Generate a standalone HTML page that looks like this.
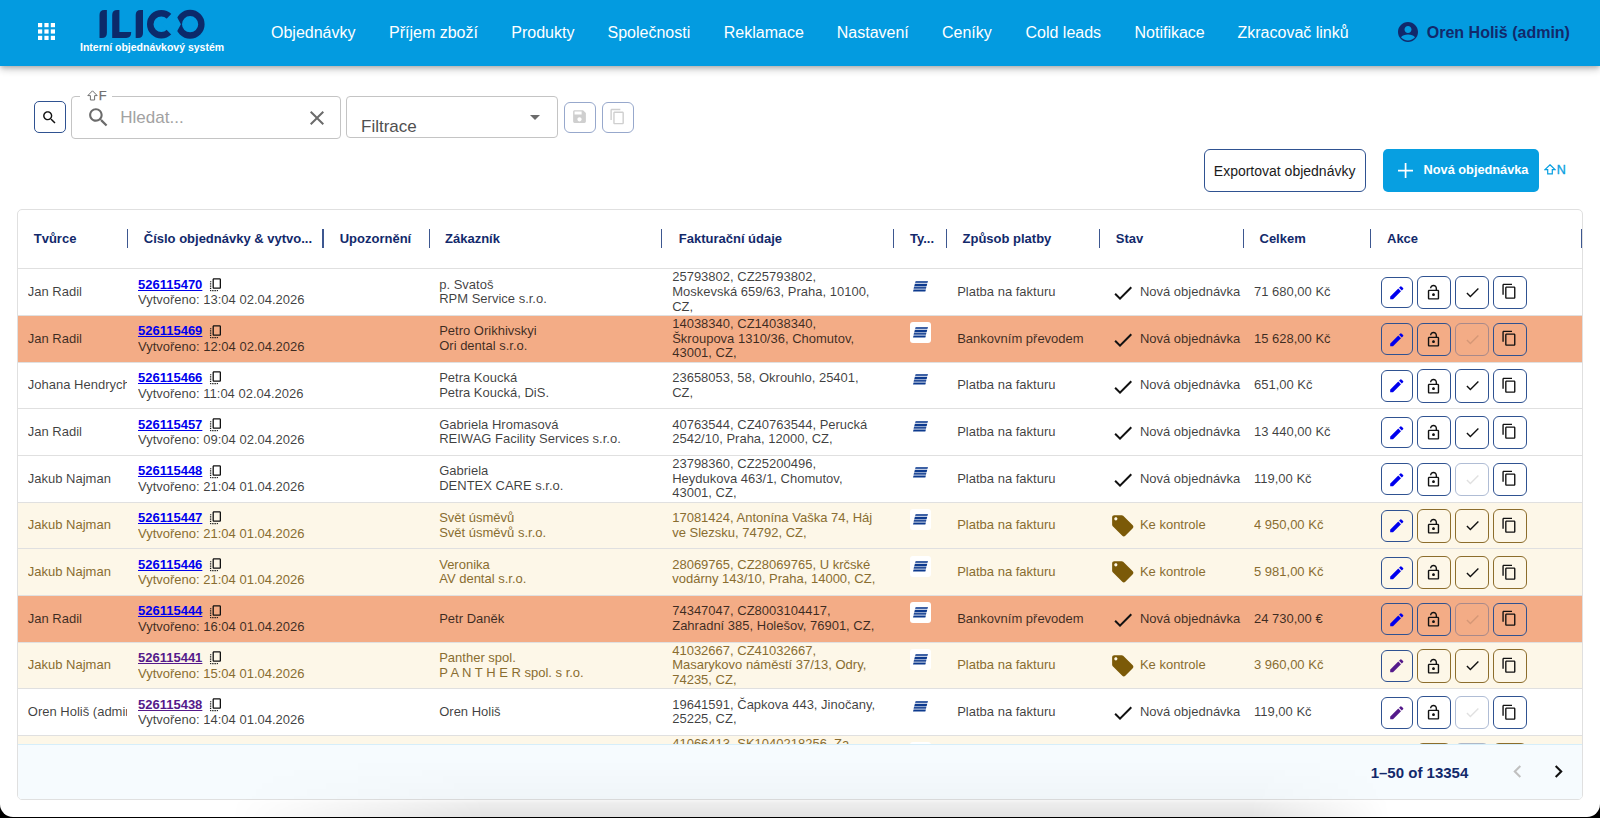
<!DOCTYPE html>
<html><head><meta charset="utf-8"><title>ILICO</title>
<style>
*{box-sizing:border-box}
html,body{margin:0;padding:0;width:1600px;height:818px;overflow:hidden;background:#000;font-family:"Liberation Sans",sans-serif}
#win{position:absolute;left:0;top:0;width:1600px;height:816.7px;background:#fff;border-radius:0 0 13px 13px;overflow:hidden}
.abs{position:absolute}
#hdr{position:absolute;left:0;top:0;width:1600px;height:66px;background:#039be0;box-shadow:0 2px 4px -1px rgba(0,0,0,.18),0 4px 6px 0 rgba(0,0,0,.12),0 2px 10px 0 rgba(0,0,0,.11);z-index:5}
.nav{position:absolute;top:24px;font-size:16px;color:#fff;white-space:nowrap;line-height:18px}
#tbl{position:absolute;left:17.4px;top:208.8px;width:1565.8px;height:591.2px;border:1px solid #e0e0e0;border-radius:5px;overflow:hidden;background:#fff}
.hcell{position:absolute;top:230.6px;font-size:13px;font-weight:bold;color:#12296b;white-space:nowrap;line-height:15px}
.sep{position:absolute;top:229px;width:1.3px;height:19px;background:#3d5790}
.row{position:absolute;left:0;width:1600px;height:46.67px;border-top:1px solid #e0e0e0;font-size:13px;line-height:14.67px}
.cell{position:absolute;top:0.3px;height:45.67px;display:flex;align-items:center;white-space:nowrap;overflow:hidden}
.clip{display:block;overflow:hidden;white-space:nowrap}
.num{display:block}
.num .l1{position:absolute;top:8.1px;left:0;height:16px;width:100px}
.num .l1 a{font-weight:bold;text-decoration:underline;text-underline-offset:0.5px}
.num .l2{position:absolute;top:23.7px;left:0}
.tbox{position:absolute;width:21.3px;height:21px;background:#fff;border-radius:3px;top:6.3px}
.abtn{position:absolute;border:1.5px solid;border-radius:6px}
</style></head><body><div id="win">

<div id="hdr">
<svg class="abs" style="left:38px;top:23px;width:17px;height:17px" viewBox="0 0 17 17"><rect x="0.0" y="0.0" width="4.2" height="4.2" fill="#fff"/><rect x="6.4" y="0.0" width="4.2" height="4.2" fill="#fff"/><rect x="12.8" y="0.0" width="4.2" height="4.2" fill="#fff"/><rect x="0.0" y="6.4" width="4.2" height="4.2" fill="#fff"/><rect x="6.4" y="6.4" width="4.2" height="4.2" fill="#fff"/><rect x="12.8" y="6.4" width="4.2" height="4.2" fill="#fff"/><rect x="0.0" y="12.8" width="4.2" height="4.2" fill="#fff"/><rect x="6.4" y="12.8" width="4.2" height="4.2" fill="#fff"/><rect x="12.8" y="12.8" width="4.2" height="4.2" fill="#fff"/></svg>
<svg class="abs" style="left:95px;top:5px;width:115px;height:37px" viewBox="0 0 115 37">
<g fill="#0c2a6a">
<path d="M4.5 33 V10 Q4.5 5 9.5 5 H11.9 V28 Q11.9 33 6.9 33 Z"/>
<path d="M17.2 33 V10 Q17.2 5 22.2 5 H24.4 V27.1 H36.2 Q36.2 33 31.2 33 Z"/>
<path d="M40.7 33 V10 Q40.7 5 45.7 5 H48 V28 Q48 33 43 33 Z"/>
</g>
<circle cx="66.3" cy="19.2" r="11.05" fill="none" stroke="#0c2a6a" stroke-width="6.5"/>
<circle cx="95.1" cy="19.2" r="11.3" fill="none" stroke="#0c2a6a" stroke-width="6.4"/>
<polygon points="66.3,19.2 81,4 81.7,11.4 85.9,19.2 81.7,27 81,34.4" fill="#039be0"/>
</svg>
<div class="abs" style="left:80px;top:41px;font-size:10.5px;font-weight:bold;color:#fff;white-space:nowrap;line-height:12px">Interní objednávkový systém</div>
<div class="nav" style="left:271px">Objednávky</div>
<div class="nav" style="left:389px">Příjem zboží</div>
<div class="nav" style="left:511.25px">Produkty</div>
<div class="nav" style="left:607.5px">Společnosti</div>
<div class="nav" style="left:723.75px">Reklamace</div>
<div class="nav" style="left:836.75px">Nastavení</div>
<div class="nav" style="left:942px">Ceníky</div>
<div class="nav" style="left:1025.5px">Cold leads</div>
<div class="nav" style="left:1134.5px">Notifikace</div>
<div class="nav" style="left:1237.5px">Zkracovač linků</div>
<svg style="position:absolute;left:1395.5px;top:19.9px;width:24px;height:24px" viewBox="0 0 24 24"><path fill="#12296b" d="M12 2C6.48 2 2 6.48 2 12s4.48 10 10 10 10-4.48 10-10S17.52 2 12 2zm0 4c1.93 0 3.5 1.57 3.5 3.5S13.93 13 12 13s-3.5-1.57-3.5-3.5S10.07 6 12 6zm7 11.25c-1.52 1.92-4.17 3.25-7 3.25s-5.48-1.33-7-3.25C6.19 15.3 9.02 14.5 12 14.5s5.81.8 7 2.75z"/></svg>
<div class="abs" style="left:1426.8px;top:24px;font-size:16px;font-weight:bold;color:#12296b;white-space:nowrap;line-height:18px">Oren Holiš (admin)</div>
</div>
<div class="abs" style="left:34px;top:101.3px;width:31.8px;height:31.9px;border:1.5px solid #2f5291;border-radius:5px"><svg style="position:absolute;left:5.8px;top:6.7px;width:17px;height:17px" viewBox="0 0 24 24"><path fill="#111" d="M15.5 14h-.79l-.28-.27C15.41 12.59 16 11.11 16 9.5 16 5.91 13.09 3 9.5 3S3 5.91 3 9.5 5.91 16 9.5 16c1.61 0 3.09-.59 4.23-1.57l.27.28v.79l5 4.99L20.49 19l-4.99-5zm-6 0C7.01 14 5 11.99 5 9.5S7.01 5 9.5 5 14 7.01 14 9.5 11.99 14 9.5 14z"/></svg></div>
<div class="abs" style="left:71.3px;top:96.4px;width:269.8px;height:42.4px;border:1.3px solid #c4c4c4;border-radius:4px"></div>
<div class="abs" style="left:80px;top:90px;width:31.6px;height:10px;background:#fff"></div>
<svg class="abs" style="left:86.5px;top:90.1px;width:11px;height:11px" viewBox="0 0 11 11"><path d="M5.5 0.8 L10.2 5.6 H7.6 V10 H3.4 V5.6 H0.8 Z" fill="none" stroke="#707070" stroke-width="1"/></svg>
<div class="abs" style="left:98.8px;top:89.4px;font-size:12.8px;color:#707070;line-height:14px;-webkit-text-stroke:0.25px #707070">F</div>
<svg style="position:absolute;left:85.8px;top:105px;width:25px;height:25px" viewBox="0 0 24 24"><path fill="#6b6b6b" d="M15.5 14h-.79l-.28-.27C15.41 12.59 16 11.11 16 9.5 16 5.91 13.09 3 9.5 3S3 5.91 3 9.5 5.91 16 9.5 16c1.61 0 3.09-.59 4.23-1.57l.27.28v.79l5 4.99L20.49 19l-4.99-5zm-6 0C7.01 14 5 11.99 5 9.5S7.01 5 9.5 5 14 7.01 14 9.5 11.99 14 9.5 14z"/></svg>
<div class="abs" style="left:120.3px;top:108.1px;font-size:17px;color:#a2a2a2;line-height:20px;white-space:nowrap">Hledat...</div>
<svg style="position:absolute;left:305.3px;top:105.8px;width:24px;height:24px" viewBox="0 0 24 24"><path fill="#6b6b6b" d="M19 6.41 17.59 5 12 10.59 6.41 5 5 6.41 10.59 12 5 17.59 6.41 19 12 13.41 17.59 19 19 17.59 13.41 12z"/></svg>
<div class="abs" style="left:346.4px;top:96.4px;width:211.5px;height:42.1px;border:1.3px solid #c4c4c4;border-radius:4px"></div>
<div class="abs" style="left:361px;top:116.6px;font-size:17px;color:#505050;line-height:20px;white-space:nowrap">Filtrace</div>
<svg style="position:absolute;left:523.2px;top:105.2px;width:24px;height:24px" viewBox="0 0 24 24"><path fill="#6b6b6b" d="M7 10l5 5 5-5z"/></svg>
<div class="abs" style="left:564.2px;top:101.7px;width:31.5px;height:31.3px;border:1.5px solid #97a8cc;border-radius:6px"><svg style="position:absolute;left:5.5px;top:5.3px;width:17px;height:17px" viewBox="0 0 24 24"><path fill="#cfcfcf" d="M17 3H5c-1.11 0-2 .9-2 2v14c0 1.1.89 2 2 2h14c1.1 0 2-.9 2-2V7l-4-4zm-5 16c-1.66 0-3-1.34-3-3s1.34-3 3-3 3 1.34 3 3-1.34 3-3 3zm3-10H5V5h10v4z"/></svg></div>
<div class="abs" style="left:602.2px;top:101.7px;width:31.6px;height:31.3px;border:1.5px solid #97a8cc;border-radius:6px"><svg style="position:absolute;left:5.5px;top:5.6px;width:17px;height:17px" viewBox="0 0 24 24"><path fill="#cfcfcf" d="M16 1H4c-1.1 0-2 .9-2 2v14h2V3h12V1zm3 4H8c-1.1 0-2 .9-2 2v14c0 1.1.9 2 2 2h11c1.1 0 2-.9 2-2V7c0-1.1-.9-2-2-2zm0 16H8V7h11v14z"/></svg></div>
<div class="abs" style="left:1203.8px;top:149.2px;width:161.8px;height:42.5px;border:1.6px solid #2f5291;border-radius:6px"></div>
<div class="abs" style="left:1213.8px;top:163px;font-size:14px;color:#1a1a1a;line-height:16px;white-space:nowrap">Exportovat objednávky</div>
<div class="abs" style="left:1382.7px;top:149.1px;width:156px;height:42.5px;background:#079fe1;border-radius:5px"></div>
<svg class="abs" style="left:1398px;top:163px;width:15.2px;height:15.2px" viewBox="0 0 15 15"><path d="M7.5 0 V15 M0 7.5 H15" stroke="#fff" stroke-width="1.7"/></svg>
<div class="abs" style="left:1423.6px;top:162.3px;font-size:12.75px;font-weight:bold;color:#fff;line-height:15px;white-space:nowrap">Nová objednávka</div>
<svg class="abs" style="left:1543.5px;top:164.3px;width:12px;height:10.5px" viewBox="0 0 12 10.5"><path d="M6 0.8 L11 5.6 H8.3 V9.8 H3.7 V5.6 H1 Z" fill="none" stroke="#079fe1" stroke-width="1.2"/></svg>
<div class="abs" style="left:1556.8px;top:162.5px;font-size:12.5px;color:#079fe1;line-height:14px;-webkit-text-stroke:0.35px #079fe1">N</div>
<div id="tbl"><div id="inner" style="position:absolute;left:-18.4px;top:-209.8px;width:1600px;height:818px">
<div class="hcell" style="left:33.75px">Tvůrce</div>
<div class="hcell" style="left:143.75px">Číslo objednávky &amp; vytvo...</div>
<div class="hcell" style="left:339.7px">Upozornění</div>
<div class="hcell" style="left:445px">Zákazník</div>
<div class="hcell" style="left:678.75px">Fakturační údaje</div>
<div class="hcell" style="left:910px">Ty...</div>
<div class="hcell" style="left:962.5px">Způsob platby</div>
<div class="hcell" style="left:1115.75px">Stav</div>
<div class="hcell" style="left:1259.5px">Celkem</div>
<div class="hcell" style="left:1387px">Akce</div>
<div class="sep" style="left:126.85px"></div>
<div class="sep" style="left:322.35px"></div>
<div class="sep" style="left:428.6px"></div>
<div class="sep" style="left:661.1px"></div>
<div class="sep" style="left:893.1px"></div>
<div class="sep" style="left:945.85px"></div>
<div class="sep" style="left:1098.85px"></div>
<div class="sep" style="left:1243.1px"></div>
<div class="sep" style="left:1369.85px"></div>
<div class="sep" style="left:1581.1px"></div>
<div class="row" style="top:268.3px;background:#ffffff;color:rgba(0,0,0,0.76)"><div class="cell" style="left:27.8px;width:99.2px"><span class="clip">Jan Radil</span></div><div class="cell num" style="left:138px;width:190px"><div class="l1"><a style="color:#0000ee">526115470</a><svg style="position:absolute;left:69.85px;top:-0.6px;width:15.6px;height:15.6px" viewBox="0 0 24 24"><path fill="#111" d="M18 2H9c-1.1 0-2 .9-2 2v12c0 1.1.9 2 2 2h9c1.1 0 2-.9 2-2V4c0-1.1-.9-2-2-2zm0 14H9V4h9v12zM3 15v-2h2v2H3zm0-5.5h2v2H3v-2zM10 20h2v2h-2v-2zm-7-1.5v-2h2v2H3zM5 22c-1.1 0-2-.9-2-2h2v2zm3.5 0h-2v-2h2v2zm5 0v-2h2c0 1.1-.9 2-2 2zM5 6v2H3c0-1.1.9-2 2-2z"/></svg></div><div class="l2">Vytvořeno: 13:04 02.04.2026</div></div><div class="cell" style="left:439.2px;width:225px"><div>p. Svatoš<br>RPM Service s.r.o.</div></div><div class="cell" style="left:672.2px;width:225px"><div>25793802, CZ25793802,<br>Moskevská 659/63, Praha, 10100,<br>CZ,</div></div><svg style="position:absolute;left:912.6px;top:11.5px;width:15px;height:11px" viewBox="0 0 15 11"><g fill="#0d3a8e"><polygon points="2.65,0 15,0 14.45,2.0 2.1,2.0" opacity="0.8"/><polygon points="1.9,2.75 14.25,2.75 13.7,4.9 1.35,4.9"/><polygon points="1.15,5.6 13.5,5.6 12.95,7.75 0.6,7.75" opacity="0.9"/><polygon points="0.55,8.45 12.9,8.45 12.35,10.6 0,10.6"/></g></svg><div class="cell" style="left:957.2px;width:140px">Platba na fakturu</div><svg style="position:absolute;left:1110.6px;top:11.9px;width:24px;height:24px" viewBox="0 0 24 24"><path fill="#111" d="M9 16.17 4.83 12l-1.42 1.41L9 19 21 7l-1.41-1.41z"/></svg><div class="cell" style="left:1139.9px;width:110px">Nová objednávka</div><div class="cell" style="left:1254px;width:110px">71 680,00 Kč</div><div class="abtn" style="left:1381px;top:7.5px;width:31.8px;height:31.7px;border-color:#2f5291"><svg style="position:absolute;left:5.5px;top:6.3px;width:17.5px;height:17.5px" viewBox="0 0 24 24"><path fill="#0000ee" d="M3 17.46v3.04c0 .28.22.5.5.5h3.04c.13 0 .26-.05.35-.15L17.81 9.94l-3.75-3.75L3.15 17.1c-.1.1-.15.22-.15.36zM20.71 7.04a.9959.9959 0 0 0 0-1.41l-2.34-2.34a.9959.9959 0 0 0-1.41 0l-1.83 1.83 3.75 3.75 1.83-1.83z"/></svg></div><div class="abtn" style="left:1417px;top:6.7px;width:33.5px;height:33.3px;border-color:#2f5291"><svg style="position:absolute;left:7.0px;top:7.4px;width:17px;height:17px" viewBox="0 0 24 24"><path fill="#111" d="M18 8h-1V6c0-2.76-2.24-5-5-5S7 3.24 7 6h2c0-1.66 1.34-3 3-3s3 1.34 3 3v2H6c-1.1 0-2 .9-2 2v10c0 1.1.9 2 2 2h12c1.1 0 2-.9 2-2V10c0-1.1-.9-2-2-2zm0 12H6V10h12v10zm-6-3c1.1 0 2-.9 2-2s-.9-2-2-2-2 .9-2 2 .9 2 2 2z"/></svg></div><div class="abtn" style="left:1455px;top:6.7px;width:33.8px;height:33.3px;border-color:#2f5291"><svg style="position:absolute;left:7.6px;top:6.9px;width:17px;height:17px" viewBox="0 0 24 24"><path fill="#111" d="M9 16.17 4.83 12l-1.42 1.41L9 19 21 7l-1.41-1.41z"/></svg></div><div class="abtn" style="left:1493px;top:6.7px;width:33.8px;height:33.3px;border-color:#2f5291"><svg style="position:absolute;left:7.1px;top:6.5px;width:16.5px;height:16.5px" viewBox="0 0 24 24"><path fill="#111" d="M16 1H4c-1.1 0-2 .9-2 2v14h2V3h12V1zm3 4H8c-1.1 0-2 .9-2 2v14c0 1.1.9 2 2 2h11c1.1 0 2-.9 2-2V7c0-1.1-.9-2-2-2zm0 16H8V7h11v14z"/></svg></div></div>
<div class="row" style="top:314.97px;background:#f3ac86;color:rgba(0,0,0,0.76)"><div class="cell" style="left:27.8px;width:99.2px"><span class="clip">Jan Radil</span></div><div class="cell num" style="left:138px;width:190px"><div class="l1"><a style="color:#0000ee">526115469</a><svg style="position:absolute;left:69.85px;top:-0.6px;width:15.6px;height:15.6px" viewBox="0 0 24 24"><path fill="#111" d="M18 2H9c-1.1 0-2 .9-2 2v12c0 1.1.9 2 2 2h9c1.1 0 2-.9 2-2V4c0-1.1-.9-2-2-2zm0 14H9V4h9v12zM3 15v-2h2v2H3zm0-5.5h2v2H3v-2zM10 20h2v2h-2v-2zm-7-1.5v-2h2v2H3zM5 22c-1.1 0-2-.9-2-2h2v2zm3.5 0h-2v-2h2v2zm5 0v-2h2c0 1.1-.9 2-2 2zM5 6v2H3c0-1.1.9-2 2-2z"/></svg></div><div class="l2">Vytvořeno: 12:04 02.04.2026</div></div><div class="cell" style="left:439.2px;width:225px"><div>Petro Orikhivskyi<br>Ori dental s.r.o.</div></div><div class="cell" style="left:672.2px;width:225px"><div>14038340, CZ14038340,<br>Škroupova 1310/36, Chomutov,<br>43001, CZ,</div></div><div class="tbox" style="left:909.8px"></div><svg style="position:absolute;left:912.6px;top:11.5px;width:15px;height:11px" viewBox="0 0 15 11"><g fill="#0d3a8e"><polygon points="2.65,0 15,0 14.45,2.0 2.1,2.0" opacity="0.8"/><polygon points="1.9,2.75 14.25,2.75 13.7,4.9 1.35,4.9"/><polygon points="1.15,5.6 13.5,5.6 12.95,7.75 0.6,7.75" opacity="0.9"/><polygon points="0.55,8.45 12.9,8.45 12.35,10.6 0,10.6"/></g></svg><div class="cell" style="left:957.2px;width:140px">Bankovním převodem</div><svg style="position:absolute;left:1110.6px;top:11.9px;width:24px;height:24px" viewBox="0 0 24 24"><path fill="#111" d="M9 16.17 4.83 12l-1.42 1.41L9 19 21 7l-1.41-1.41z"/></svg><div class="cell" style="left:1139.9px;width:110px">Nová objednávka</div><div class="cell" style="left:1254px;width:110px">15 628,00 Kč</div><div class="abtn" style="left:1381px;top:7.5px;width:31.8px;height:31.7px;border-color:#2f5291"><svg style="position:absolute;left:5.5px;top:6.3px;width:17.5px;height:17.5px" viewBox="0 0 24 24"><path fill="#0000ee" d="M3 17.46v3.04c0 .28.22.5.5.5h3.04c.13 0 .26-.05.35-.15L17.81 9.94l-3.75-3.75L3.15 17.1c-.1.1-.15.22-.15.36zM20.71 7.04a.9959.9959 0 0 0 0-1.41l-2.34-2.34a.9959.9959 0 0 0-1.41 0l-1.83 1.83 3.75 3.75 1.83-1.83z"/></svg></div><div class="abtn" style="left:1417px;top:6.7px;width:33.5px;height:33.3px;border-color:#2f5291"><svg style="position:absolute;left:7.0px;top:7.4px;width:17px;height:17px" viewBox="0 0 24 24"><path fill="#111" d="M18 8h-1V6c0-2.76-2.24-5-5-5S7 3.24 7 6h2c0-1.66 1.34-3 3-3s3 1.34 3 3v2H6c-1.1 0-2 .9-2 2v10c0 1.1.9 2 2 2h12c1.1 0 2-.9 2-2V10c0-1.1-.9-2-2-2zm0 12H6V10h12v10zm-6-3c1.1 0 2-.9 2-2s-.9-2-2-2-2 .9-2 2 .9 2 2 2z"/></svg></div><div class="abtn" style="left:1455px;top:6.7px;width:33.8px;height:33.3px;border-color:rgba(47,82,145,0.38)"><svg style="position:absolute;left:7.6px;top:6.9px;width:17px;height:17px" viewBox="0 0 24 24"><path fill="rgba(0,0,0,0.12)" d="M9 16.17 4.83 12l-1.42 1.41L9 19 21 7l-1.41-1.41z"/></svg></div><div class="abtn" style="left:1493px;top:6.7px;width:33.8px;height:33.3px;border-color:#2f5291"><svg style="position:absolute;left:7.1px;top:6.5px;width:16.5px;height:16.5px" viewBox="0 0 24 24"><path fill="#111" d="M16 1H4c-1.1 0-2 .9-2 2v14h2V3h12V1zm3 4H8c-1.1 0-2 .9-2 2v14c0 1.1.9 2 2 2h11c1.1 0 2-.9 2-2V7c0-1.1-.9-2-2-2zm0 16H8V7h11v14z"/></svg></div></div>
<div class="row" style="top:361.64px;background:#ffffff;color:rgba(0,0,0,0.76)"><div class="cell" style="left:27.8px;width:99.2px"><span class="clip">Johana Hendrych</span></div><div class="cell num" style="left:138px;width:190px"><div class="l1"><a style="color:#0000ee">526115466</a><svg style="position:absolute;left:69.85px;top:-0.6px;width:15.6px;height:15.6px" viewBox="0 0 24 24"><path fill="#111" d="M18 2H9c-1.1 0-2 .9-2 2v12c0 1.1.9 2 2 2h9c1.1 0 2-.9 2-2V4c0-1.1-.9-2-2-2zm0 14H9V4h9v12zM3 15v-2h2v2H3zm0-5.5h2v2H3v-2zM10 20h2v2h-2v-2zm-7-1.5v-2h2v2H3zM5 22c-1.1 0-2-.9-2-2h2v2zm3.5 0h-2v-2h2v2zm5 0v-2h2c0 1.1-.9 2-2 2zM5 6v2H3c0-1.1.9-2 2-2z"/></svg></div><div class="l2">Vytvořeno: 11:04 02.04.2026</div></div><div class="cell" style="left:439.2px;width:225px"><div>Petra Koucká<br>Petra Koucká, DiS.</div></div><div class="cell" style="left:672.2px;width:225px"><div>23658053, 58, Okrouhlo, 25401,<br>CZ,</div></div><svg style="position:absolute;left:912.6px;top:11.5px;width:15px;height:11px" viewBox="0 0 15 11"><g fill="#0d3a8e"><polygon points="2.65,0 15,0 14.45,2.0 2.1,2.0" opacity="0.8"/><polygon points="1.9,2.75 14.25,2.75 13.7,4.9 1.35,4.9"/><polygon points="1.15,5.6 13.5,5.6 12.95,7.75 0.6,7.75" opacity="0.9"/><polygon points="0.55,8.45 12.9,8.45 12.35,10.6 0,10.6"/></g></svg><div class="cell" style="left:957.2px;width:140px">Platba na fakturu</div><svg style="position:absolute;left:1110.6px;top:11.9px;width:24px;height:24px" viewBox="0 0 24 24"><path fill="#111" d="M9 16.17 4.83 12l-1.42 1.41L9 19 21 7l-1.41-1.41z"/></svg><div class="cell" style="left:1139.9px;width:110px">Nová objednávka</div><div class="cell" style="left:1254px;width:110px">651,00 Kč</div><div class="abtn" style="left:1381px;top:7.5px;width:31.8px;height:31.7px;border-color:#2f5291"><svg style="position:absolute;left:5.5px;top:6.3px;width:17.5px;height:17.5px" viewBox="0 0 24 24"><path fill="#0000ee" d="M3 17.46v3.04c0 .28.22.5.5.5h3.04c.13 0 .26-.05.35-.15L17.81 9.94l-3.75-3.75L3.15 17.1c-.1.1-.15.22-.15.36zM20.71 7.04a.9959.9959 0 0 0 0-1.41l-2.34-2.34a.9959.9959 0 0 0-1.41 0l-1.83 1.83 3.75 3.75 1.83-1.83z"/></svg></div><div class="abtn" style="left:1417px;top:6.7px;width:33.5px;height:33.3px;border-color:#2f5291"><svg style="position:absolute;left:7.0px;top:7.4px;width:17px;height:17px" viewBox="0 0 24 24"><path fill="#111" d="M18 8h-1V6c0-2.76-2.24-5-5-5S7 3.24 7 6h2c0-1.66 1.34-3 3-3s3 1.34 3 3v2H6c-1.1 0-2 .9-2 2v10c0 1.1.9 2 2 2h12c1.1 0 2-.9 2-2V10c0-1.1-.9-2-2-2zm0 12H6V10h12v10zm-6-3c1.1 0 2-.9 2-2s-.9-2-2-2-2 .9-2 2 .9 2 2 2z"/></svg></div><div class="abtn" style="left:1455px;top:6.7px;width:33.8px;height:33.3px;border-color:#2f5291"><svg style="position:absolute;left:7.6px;top:6.9px;width:17px;height:17px" viewBox="0 0 24 24"><path fill="#111" d="M9 16.17 4.83 12l-1.42 1.41L9 19 21 7l-1.41-1.41z"/></svg></div><div class="abtn" style="left:1493px;top:6.7px;width:33.8px;height:33.3px;border-color:#2f5291"><svg style="position:absolute;left:7.1px;top:6.5px;width:16.5px;height:16.5px" viewBox="0 0 24 24"><path fill="#111" d="M16 1H4c-1.1 0-2 .9-2 2v14h2V3h12V1zm3 4H8c-1.1 0-2 .9-2 2v14c0 1.1.9 2 2 2h11c1.1 0 2-.9 2-2V7c0-1.1-.9-2-2-2zm0 16H8V7h11v14z"/></svg></div></div>
<div class="row" style="top:408.31px;background:#ffffff;color:rgba(0,0,0,0.76)"><div class="cell" style="left:27.8px;width:99.2px"><span class="clip">Jan Radil</span></div><div class="cell num" style="left:138px;width:190px"><div class="l1"><a style="color:#0000ee">526115457</a><svg style="position:absolute;left:69.85px;top:-0.6px;width:15.6px;height:15.6px" viewBox="0 0 24 24"><path fill="#111" d="M18 2H9c-1.1 0-2 .9-2 2v12c0 1.1.9 2 2 2h9c1.1 0 2-.9 2-2V4c0-1.1-.9-2-2-2zm0 14H9V4h9v12zM3 15v-2h2v2H3zm0-5.5h2v2H3v-2zM10 20h2v2h-2v-2zm-7-1.5v-2h2v2H3zM5 22c-1.1 0-2-.9-2-2h2v2zm3.5 0h-2v-2h2v2zm5 0v-2h2c0 1.1-.9 2-2 2zM5 6v2H3c0-1.1.9-2 2-2z"/></svg></div><div class="l2">Vytvořeno: 09:04 02.04.2026</div></div><div class="cell" style="left:439.2px;width:225px"><div>Gabriela Hromasová<br>REIWAG Facility Services s.r.o.</div></div><div class="cell" style="left:672.2px;width:225px"><div>40763544, CZ40763544, Perucká<br>2542/10, Praha, 12000, CZ,</div></div><svg style="position:absolute;left:912.6px;top:11.5px;width:15px;height:11px" viewBox="0 0 15 11"><g fill="#0d3a8e"><polygon points="2.65,0 15,0 14.45,2.0 2.1,2.0" opacity="0.8"/><polygon points="1.9,2.75 14.25,2.75 13.7,4.9 1.35,4.9"/><polygon points="1.15,5.6 13.5,5.6 12.95,7.75 0.6,7.75" opacity="0.9"/><polygon points="0.55,8.45 12.9,8.45 12.35,10.6 0,10.6"/></g></svg><div class="cell" style="left:957.2px;width:140px">Platba na fakturu</div><svg style="position:absolute;left:1110.6px;top:11.9px;width:24px;height:24px" viewBox="0 0 24 24"><path fill="#111" d="M9 16.17 4.83 12l-1.42 1.41L9 19 21 7l-1.41-1.41z"/></svg><div class="cell" style="left:1139.9px;width:110px">Nová objednávka</div><div class="cell" style="left:1254px;width:110px">13 440,00 Kč</div><div class="abtn" style="left:1381px;top:7.5px;width:31.8px;height:31.7px;border-color:#2f5291"><svg style="position:absolute;left:5.5px;top:6.3px;width:17.5px;height:17.5px" viewBox="0 0 24 24"><path fill="#0000ee" d="M3 17.46v3.04c0 .28.22.5.5.5h3.04c.13 0 .26-.05.35-.15L17.81 9.94l-3.75-3.75L3.15 17.1c-.1.1-.15.22-.15.36zM20.71 7.04a.9959.9959 0 0 0 0-1.41l-2.34-2.34a.9959.9959 0 0 0-1.41 0l-1.83 1.83 3.75 3.75 1.83-1.83z"/></svg></div><div class="abtn" style="left:1417px;top:6.7px;width:33.5px;height:33.3px;border-color:#2f5291"><svg style="position:absolute;left:7.0px;top:7.4px;width:17px;height:17px" viewBox="0 0 24 24"><path fill="#111" d="M18 8h-1V6c0-2.76-2.24-5-5-5S7 3.24 7 6h2c0-1.66 1.34-3 3-3s3 1.34 3 3v2H6c-1.1 0-2 .9-2 2v10c0 1.1.9 2 2 2h12c1.1 0 2-.9 2-2V10c0-1.1-.9-2-2-2zm0 12H6V10h12v10zm-6-3c1.1 0 2-.9 2-2s-.9-2-2-2-2 .9-2 2 .9 2 2 2z"/></svg></div><div class="abtn" style="left:1455px;top:6.7px;width:33.8px;height:33.3px;border-color:#2f5291"><svg style="position:absolute;left:7.6px;top:6.9px;width:17px;height:17px" viewBox="0 0 24 24"><path fill="#111" d="M9 16.17 4.83 12l-1.42 1.41L9 19 21 7l-1.41-1.41z"/></svg></div><div class="abtn" style="left:1493px;top:6.7px;width:33.8px;height:33.3px;border-color:#2f5291"><svg style="position:absolute;left:7.1px;top:6.5px;width:16.5px;height:16.5px" viewBox="0 0 24 24"><path fill="#111" d="M16 1H4c-1.1 0-2 .9-2 2v14h2V3h12V1zm3 4H8c-1.1 0-2 .9-2 2v14c0 1.1.9 2 2 2h11c1.1 0 2-.9 2-2V7c0-1.1-.9-2-2-2zm0 16H8V7h11v14z"/></svg></div></div>
<div class="row" style="top:454.98px;background:#ffffff;color:rgba(0,0,0,0.76)"><div class="cell" style="left:27.8px;width:99.2px"><span class="clip">Jakub Najman</span></div><div class="cell num" style="left:138px;width:190px"><div class="l1"><a style="color:#0000ee">526115448</a><svg style="position:absolute;left:69.85px;top:-0.6px;width:15.6px;height:15.6px" viewBox="0 0 24 24"><path fill="#111" d="M18 2H9c-1.1 0-2 .9-2 2v12c0 1.1.9 2 2 2h9c1.1 0 2-.9 2-2V4c0-1.1-.9-2-2-2zm0 14H9V4h9v12zM3 15v-2h2v2H3zm0-5.5h2v2H3v-2zM10 20h2v2h-2v-2zm-7-1.5v-2h2v2H3zM5 22c-1.1 0-2-.9-2-2h2v2zm3.5 0h-2v-2h2v2zm5 0v-2h2c0 1.1-.9 2-2 2zM5 6v2H3c0-1.1.9-2 2-2z"/></svg></div><div class="l2">Vytvořeno: 21:04 01.04.2026</div></div><div class="cell" style="left:439.2px;width:225px"><div>Gabriela<br>DENTEX CARE s.r.o.</div></div><div class="cell" style="left:672.2px;width:225px"><div>23798360, CZ25200496,<br>Heydukova 463/1, Chomutov,<br>43001, CZ,</div></div><svg style="position:absolute;left:912.6px;top:11.5px;width:15px;height:11px" viewBox="0 0 15 11"><g fill="#0d3a8e"><polygon points="2.65,0 15,0 14.45,2.0 2.1,2.0" opacity="0.8"/><polygon points="1.9,2.75 14.25,2.75 13.7,4.9 1.35,4.9"/><polygon points="1.15,5.6 13.5,5.6 12.95,7.75 0.6,7.75" opacity="0.9"/><polygon points="0.55,8.45 12.9,8.45 12.35,10.6 0,10.6"/></g></svg><div class="cell" style="left:957.2px;width:140px">Platba na fakturu</div><svg style="position:absolute;left:1110.6px;top:11.9px;width:24px;height:24px" viewBox="0 0 24 24"><path fill="#111" d="M9 16.17 4.83 12l-1.42 1.41L9 19 21 7l-1.41-1.41z"/></svg><div class="cell" style="left:1139.9px;width:110px">Nová objednávka</div><div class="cell" style="left:1254px;width:110px">119,00 Kč</div><div class="abtn" style="left:1381px;top:7.5px;width:31.8px;height:31.7px;border-color:#2f5291"><svg style="position:absolute;left:5.5px;top:6.3px;width:17.5px;height:17.5px" viewBox="0 0 24 24"><path fill="#0000ee" d="M3 17.46v3.04c0 .28.22.5.5.5h3.04c.13 0 .26-.05.35-.15L17.81 9.94l-3.75-3.75L3.15 17.1c-.1.1-.15.22-.15.36zM20.71 7.04a.9959.9959 0 0 0 0-1.41l-2.34-2.34a.9959.9959 0 0 0-1.41 0l-1.83 1.83 3.75 3.75 1.83-1.83z"/></svg></div><div class="abtn" style="left:1417px;top:6.7px;width:33.5px;height:33.3px;border-color:#2f5291"><svg style="position:absolute;left:7.0px;top:7.4px;width:17px;height:17px" viewBox="0 0 24 24"><path fill="#111" d="M18 8h-1V6c0-2.76-2.24-5-5-5S7 3.24 7 6h2c0-1.66 1.34-3 3-3s3 1.34 3 3v2H6c-1.1 0-2 .9-2 2v10c0 1.1.9 2 2 2h12c1.1 0 2-.9 2-2V10c0-1.1-.9-2-2-2zm0 12H6V10h12v10zm-6-3c1.1 0 2-.9 2-2s-.9-2-2-2-2 .9-2 2 .9 2 2 2z"/></svg></div><div class="abtn" style="left:1455px;top:6.7px;width:33.8px;height:33.3px;border-color:rgba(47,82,145,0.38)"><svg style="position:absolute;left:7.6px;top:6.9px;width:17px;height:17px" viewBox="0 0 24 24"><path fill="rgba(0,0,0,0.12)" d="M9 16.17 4.83 12l-1.42 1.41L9 19 21 7l-1.41-1.41z"/></svg></div><div class="abtn" style="left:1493px;top:6.7px;width:33.8px;height:33.3px;border-color:#2f5291"><svg style="position:absolute;left:7.1px;top:6.5px;width:16.5px;height:16.5px" viewBox="0 0 24 24"><path fill="#111" d="M16 1H4c-1.1 0-2 .9-2 2v14h2V3h12V1zm3 4H8c-1.1 0-2 .9-2 2v14c0 1.1.9 2 2 2h11c1.1 0 2-.9 2-2V7c0-1.1-.9-2-2-2zm0 16H8V7h11v14z"/></svg></div></div>
<div class="row" style="top:501.65000000000003px;background:#fdf7e8;color:#896d30"><div class="cell" style="left:27.8px;width:99.2px"><span class="clip">Jakub Najman</span></div><div class="cell num" style="left:138px;width:190px"><div class="l1"><a style="color:#0000ee">526115447</a><svg style="position:absolute;left:69.85px;top:-0.6px;width:15.6px;height:15.6px" viewBox="0 0 24 24"><path fill="#111" d="M18 2H9c-1.1 0-2 .9-2 2v12c0 1.1.9 2 2 2h9c1.1 0 2-.9 2-2V4c0-1.1-.9-2-2-2zm0 14H9V4h9v12zM3 15v-2h2v2H3zm0-5.5h2v2H3v-2zM10 20h2v2h-2v-2zm-7-1.5v-2h2v2H3zM5 22c-1.1 0-2-.9-2-2h2v2zm3.5 0h-2v-2h2v2zm5 0v-2h2c0 1.1-.9 2-2 2zM5 6v2H3c0-1.1.9-2 2-2z"/></svg></div><div class="l2">Vytvořeno: 21:04 01.04.2026</div></div><div class="cell" style="left:439.2px;width:225px"><div>Svět úsměvů<br>Svět úsměvů s.r.o.</div></div><div class="cell" style="left:672.2px;width:225px"><div>17081424, Antonína Vaška 74, Háj<br>ve Slezsku, 74792, CZ,</div></div><div class="tbox" style="left:909.8px"></div><svg style="position:absolute;left:912.6px;top:11.5px;width:15px;height:11px" viewBox="0 0 15 11"><g fill="#0d3a8e"><polygon points="2.65,0 15,0 14.45,2.0 2.1,2.0" opacity="0.8"/><polygon points="1.9,2.75 14.25,2.75 13.7,4.9 1.35,4.9"/><polygon points="1.15,5.6 13.5,5.6 12.95,7.75 0.6,7.75" opacity="0.9"/><polygon points="0.55,8.45 12.9,8.45 12.35,10.6 0,10.6"/></g></svg><div class="cell" style="left:957.2px;width:140px">Platba na fakturu</div><svg style="position:absolute;left:1109.9px;top:9.9px;width:25.5px;height:25.5px" viewBox="0 0 24 24"><path fill="#7b5a08" d="M21.41 11.58l-9-9C12.05 2.22 11.55 2 11 2H4c-1.1 0-2 .9-2 2v7c0 .55.22 1.05.59 1.42l9 9c.36.36.86.58 1.41.58.55 0 1.05-.22 1.41-.59l7-7c.37-.36.59-.86.59-1.41 0-.55-.23-1.06-.59-1.42zM5.5 7C4.67 7 4 6.33 4 5.5S4.67 4 5.5 4 7 4.67 7 5.5 6.33 7 5.5 7z"/></svg><div class="cell" style="left:1139.9px;width:110px">Ke kontrole</div><div class="cell" style="left:1254px;width:110px">4 950,00 Kč</div><div class="abtn" style="left:1381px;top:7.5px;width:31.8px;height:31.7px;border-color:#2f5291"><svg style="position:absolute;left:5.5px;top:6.3px;width:17.5px;height:17.5px" viewBox="0 0 24 24"><path fill="#0000ee" d="M3 17.46v3.04c0 .28.22.5.5.5h3.04c.13 0 .26-.05.35-.15L17.81 9.94l-3.75-3.75L3.15 17.1c-.1.1-.15.22-.15.36zM20.71 7.04a.9959.9959 0 0 0 0-1.41l-2.34-2.34a.9959.9959 0 0 0-1.41 0l-1.83 1.83 3.75 3.75 1.83-1.83z"/></svg></div><div class="abtn" style="left:1417px;top:6.7px;width:33.5px;height:33.3px;border-color:#8c6d2c"><svg style="position:absolute;left:7.0px;top:7.4px;width:17px;height:17px" viewBox="0 0 24 24"><path fill="#111" d="M18 8h-1V6c0-2.76-2.24-5-5-5S7 3.24 7 6h2c0-1.66 1.34-3 3-3s3 1.34 3 3v2H6c-1.1 0-2 .9-2 2v10c0 1.1.9 2 2 2h12c1.1 0 2-.9 2-2V10c0-1.1-.9-2-2-2zm0 12H6V10h12v10zm-6-3c1.1 0 2-.9 2-2s-.9-2-2-2-2 .9-2 2 .9 2 2 2z"/></svg></div><div class="abtn" style="left:1455px;top:6.7px;width:33.8px;height:33.3px;border-color:#8c6d2c"><svg style="position:absolute;left:7.6px;top:6.9px;width:17px;height:17px" viewBox="0 0 24 24"><path fill="#111" d="M9 16.17 4.83 12l-1.42 1.41L9 19 21 7l-1.41-1.41z"/></svg></div><div class="abtn" style="left:1493px;top:6.7px;width:33.8px;height:33.3px;border-color:#8c6d2c"><svg style="position:absolute;left:7.1px;top:6.5px;width:16.5px;height:16.5px" viewBox="0 0 24 24"><path fill="#111" d="M16 1H4c-1.1 0-2 .9-2 2v14h2V3h12V1zm3 4H8c-1.1 0-2 .9-2 2v14c0 1.1.9 2 2 2h11c1.1 0 2-.9 2-2V7c0-1.1-.9-2-2-2zm0 16H8V7h11v14z"/></svg></div></div>
<div class="row" style="top:548.3199999999999px;background:#fdf7e8;color:#896d30"><div class="cell" style="left:27.8px;width:99.2px"><span class="clip">Jakub Najman</span></div><div class="cell num" style="left:138px;width:190px"><div class="l1"><a style="color:#0000ee">526115446</a><svg style="position:absolute;left:69.85px;top:-0.6px;width:15.6px;height:15.6px" viewBox="0 0 24 24"><path fill="#111" d="M18 2H9c-1.1 0-2 .9-2 2v12c0 1.1.9 2 2 2h9c1.1 0 2-.9 2-2V4c0-1.1-.9-2-2-2zm0 14H9V4h9v12zM3 15v-2h2v2H3zm0-5.5h2v2H3v-2zM10 20h2v2h-2v-2zm-7-1.5v-2h2v2H3zM5 22c-1.1 0-2-.9-2-2h2v2zm3.5 0h-2v-2h2v2zm5 0v-2h2c0 1.1-.9 2-2 2zM5 6v2H3c0-1.1.9-2 2-2z"/></svg></div><div class="l2">Vytvořeno: 21:04 01.04.2026</div></div><div class="cell" style="left:439.2px;width:225px"><div>Veronika<br>AV dental s.r.o.</div></div><div class="cell" style="left:672.2px;width:225px"><div>28069765, CZ28069765, U krčské<br>vodárny 143/10, Praha, 14000, CZ,</div></div><div class="tbox" style="left:909.8px"></div><svg style="position:absolute;left:912.6px;top:11.5px;width:15px;height:11px" viewBox="0 0 15 11"><g fill="#0d3a8e"><polygon points="2.65,0 15,0 14.45,2.0 2.1,2.0" opacity="0.8"/><polygon points="1.9,2.75 14.25,2.75 13.7,4.9 1.35,4.9"/><polygon points="1.15,5.6 13.5,5.6 12.95,7.75 0.6,7.75" opacity="0.9"/><polygon points="0.55,8.45 12.9,8.45 12.35,10.6 0,10.6"/></g></svg><div class="cell" style="left:957.2px;width:140px">Platba na fakturu</div><svg style="position:absolute;left:1109.9px;top:9.9px;width:25.5px;height:25.5px" viewBox="0 0 24 24"><path fill="#7b5a08" d="M21.41 11.58l-9-9C12.05 2.22 11.55 2 11 2H4c-1.1 0-2 .9-2 2v7c0 .55.22 1.05.59 1.42l9 9c.36.36.86.58 1.41.58.55 0 1.05-.22 1.41-.59l7-7c.37-.36.59-.86.59-1.41 0-.55-.23-1.06-.59-1.42zM5.5 7C4.67 7 4 6.33 4 5.5S4.67 4 5.5 4 7 4.67 7 5.5 6.33 7 5.5 7z"/></svg><div class="cell" style="left:1139.9px;width:110px">Ke kontrole</div><div class="cell" style="left:1254px;width:110px">5 981,00 Kč</div><div class="abtn" style="left:1381px;top:7.5px;width:31.8px;height:31.7px;border-color:#2f5291"><svg style="position:absolute;left:5.5px;top:6.3px;width:17.5px;height:17.5px" viewBox="0 0 24 24"><path fill="#0000ee" d="M3 17.46v3.04c0 .28.22.5.5.5h3.04c.13 0 .26-.05.35-.15L17.81 9.94l-3.75-3.75L3.15 17.1c-.1.1-.15.22-.15.36zM20.71 7.04a.9959.9959 0 0 0 0-1.41l-2.34-2.34a.9959.9959 0 0 0-1.41 0l-1.83 1.83 3.75 3.75 1.83-1.83z"/></svg></div><div class="abtn" style="left:1417px;top:6.7px;width:33.5px;height:33.3px;border-color:#8c6d2c"><svg style="position:absolute;left:7.0px;top:7.4px;width:17px;height:17px" viewBox="0 0 24 24"><path fill="#111" d="M18 8h-1V6c0-2.76-2.24-5-5-5S7 3.24 7 6h2c0-1.66 1.34-3 3-3s3 1.34 3 3v2H6c-1.1 0-2 .9-2 2v10c0 1.1.9 2 2 2h12c1.1 0 2-.9 2-2V10c0-1.1-.9-2-2-2zm0 12H6V10h12v10zm-6-3c1.1 0 2-.9 2-2s-.9-2-2-2-2 .9-2 2 .9 2 2 2z"/></svg></div><div class="abtn" style="left:1455px;top:6.7px;width:33.8px;height:33.3px;border-color:#8c6d2c"><svg style="position:absolute;left:7.6px;top:6.9px;width:17px;height:17px" viewBox="0 0 24 24"><path fill="#111" d="M9 16.17 4.83 12l-1.42 1.41L9 19 21 7l-1.41-1.41z"/></svg></div><div class="abtn" style="left:1493px;top:6.7px;width:33.8px;height:33.3px;border-color:#8c6d2c"><svg style="position:absolute;left:7.1px;top:6.5px;width:16.5px;height:16.5px" viewBox="0 0 24 24"><path fill="#111" d="M16 1H4c-1.1 0-2 .9-2 2v14h2V3h12V1zm3 4H8c-1.1 0-2 .9-2 2v14c0 1.1.9 2 2 2h11c1.1 0 2-.9 2-2V7c0-1.1-.9-2-2-2zm0 16H8V7h11v14z"/></svg></div></div>
<div class="row" style="top:594.99px;background:#f3ac86;color:rgba(0,0,0,0.76)"><div class="cell" style="left:27.8px;width:99.2px"><span class="clip">Jan Radil</span></div><div class="cell num" style="left:138px;width:190px"><div class="l1"><a style="color:#0000ee">526115444</a><svg style="position:absolute;left:69.85px;top:-0.6px;width:15.6px;height:15.6px" viewBox="0 0 24 24"><path fill="#111" d="M18 2H9c-1.1 0-2 .9-2 2v12c0 1.1.9 2 2 2h9c1.1 0 2-.9 2-2V4c0-1.1-.9-2-2-2zm0 14H9V4h9v12zM3 15v-2h2v2H3zm0-5.5h2v2H3v-2zM10 20h2v2h-2v-2zm-7-1.5v-2h2v2H3zM5 22c-1.1 0-2-.9-2-2h2v2zm3.5 0h-2v-2h2v2zm5 0v-2h2c0 1.1-.9 2-2 2zM5 6v2H3c0-1.1.9-2 2-2z"/></svg></div><div class="l2">Vytvořeno: 16:04 01.04.2026</div></div><div class="cell" style="left:439.2px;width:225px"><div>Petr Daněk</div></div><div class="cell" style="left:672.2px;width:225px"><div>74347047, CZ8003104417,<br>Zahradní 385, Holešov, 76901, CZ,</div></div><div class="tbox" style="left:909.8px"></div><svg style="position:absolute;left:912.6px;top:11.5px;width:15px;height:11px" viewBox="0 0 15 11"><g fill="#0d3a8e"><polygon points="2.65,0 15,0 14.45,2.0 2.1,2.0" opacity="0.8"/><polygon points="1.9,2.75 14.25,2.75 13.7,4.9 1.35,4.9"/><polygon points="1.15,5.6 13.5,5.6 12.95,7.75 0.6,7.75" opacity="0.9"/><polygon points="0.55,8.45 12.9,8.45 12.35,10.6 0,10.6"/></g></svg><div class="cell" style="left:957.2px;width:140px">Bankovním převodem</div><svg style="position:absolute;left:1110.6px;top:11.9px;width:24px;height:24px" viewBox="0 0 24 24"><path fill="#111" d="M9 16.17 4.83 12l-1.42 1.41L9 19 21 7l-1.41-1.41z"/></svg><div class="cell" style="left:1139.9px;width:110px">Nová objednávka</div><div class="cell" style="left:1254px;width:110px">24 730,00 €</div><div class="abtn" style="left:1381px;top:7.5px;width:31.8px;height:31.7px;border-color:#2f5291"><svg style="position:absolute;left:5.5px;top:6.3px;width:17.5px;height:17.5px" viewBox="0 0 24 24"><path fill="#0000ee" d="M3 17.46v3.04c0 .28.22.5.5.5h3.04c.13 0 .26-.05.35-.15L17.81 9.94l-3.75-3.75L3.15 17.1c-.1.1-.15.22-.15.36zM20.71 7.04a.9959.9959 0 0 0 0-1.41l-2.34-2.34a.9959.9959 0 0 0-1.41 0l-1.83 1.83 3.75 3.75 1.83-1.83z"/></svg></div><div class="abtn" style="left:1417px;top:6.7px;width:33.5px;height:33.3px;border-color:#2f5291"><svg style="position:absolute;left:7.0px;top:7.4px;width:17px;height:17px" viewBox="0 0 24 24"><path fill="#111" d="M18 8h-1V6c0-2.76-2.24-5-5-5S7 3.24 7 6h2c0-1.66 1.34-3 3-3s3 1.34 3 3v2H6c-1.1 0-2 .9-2 2v10c0 1.1.9 2 2 2h12c1.1 0 2-.9 2-2V10c0-1.1-.9-2-2-2zm0 12H6V10h12v10zm-6-3c1.1 0 2-.9 2-2s-.9-2-2-2-2 .9-2 2 .9 2 2 2z"/></svg></div><div class="abtn" style="left:1455px;top:6.7px;width:33.8px;height:33.3px;border-color:rgba(47,82,145,0.38)"><svg style="position:absolute;left:7.6px;top:6.9px;width:17px;height:17px" viewBox="0 0 24 24"><path fill="rgba(0,0,0,0.12)" d="M9 16.17 4.83 12l-1.42 1.41L9 19 21 7l-1.41-1.41z"/></svg></div><div class="abtn" style="left:1493px;top:6.7px;width:33.8px;height:33.3px;border-color:#2f5291"><svg style="position:absolute;left:7.1px;top:6.5px;width:16.5px;height:16.5px" viewBox="0 0 24 24"><path fill="#111" d="M16 1H4c-1.1 0-2 .9-2 2v14h2V3h12V1zm3 4H8c-1.1 0-2 .9-2 2v14c0 1.1.9 2 2 2h11c1.1 0 2-.9 2-2V7c0-1.1-.9-2-2-2zm0 16H8V7h11v14z"/></svg></div></div>
<div class="row" style="top:641.6600000000001px;background:#fdf7e8;color:#896d30"><div class="cell" style="left:27.8px;width:99.2px"><span class="clip">Jakub Najman</span></div><div class="cell num" style="left:138px;width:190px"><div class="l1"><a style="color:#551a8b">526115441</a><svg style="position:absolute;left:69.85px;top:-0.6px;width:15.6px;height:15.6px" viewBox="0 0 24 24"><path fill="#111" d="M18 2H9c-1.1 0-2 .9-2 2v12c0 1.1.9 2 2 2h9c1.1 0 2-.9 2-2V4c0-1.1-.9-2-2-2zm0 14H9V4h9v12zM3 15v-2h2v2H3zm0-5.5h2v2H3v-2zM10 20h2v2h-2v-2zm-7-1.5v-2h2v2H3zM5 22c-1.1 0-2-.9-2-2h2v2zm3.5 0h-2v-2h2v2zm5 0v-2h2c0 1.1-.9 2-2 2zM5 6v2H3c0-1.1.9-2 2-2z"/></svg></div><div class="l2">Vytvořeno: 15:04 01.04.2026</div></div><div class="cell" style="left:439.2px;width:225px"><div>Panther spol.<br>P A N T H E R spol. s r.o.</div></div><div class="cell" style="left:672.2px;width:225px"><div>41032667, CZ41032667,<br>Masarykovo náměstí 37/13, Odry,<br>74235, CZ,</div></div><div class="tbox" style="left:909.8px"></div><svg style="position:absolute;left:912.6px;top:11.5px;width:15px;height:11px" viewBox="0 0 15 11"><g fill="#0d3a8e"><polygon points="2.65,0 15,0 14.45,2.0 2.1,2.0" opacity="0.8"/><polygon points="1.9,2.75 14.25,2.75 13.7,4.9 1.35,4.9"/><polygon points="1.15,5.6 13.5,5.6 12.95,7.75 0.6,7.75" opacity="0.9"/><polygon points="0.55,8.45 12.9,8.45 12.35,10.6 0,10.6"/></g></svg><div class="cell" style="left:957.2px;width:140px">Platba na fakturu</div><svg style="position:absolute;left:1109.9px;top:9.9px;width:25.5px;height:25.5px" viewBox="0 0 24 24"><path fill="#7b5a08" d="M21.41 11.58l-9-9C12.05 2.22 11.55 2 11 2H4c-1.1 0-2 .9-2 2v7c0 .55.22 1.05.59 1.42l9 9c.36.36.86.58 1.41.58.55 0 1.05-.22 1.41-.59l7-7c.37-.36.59-.86.59-1.41 0-.55-.23-1.06-.59-1.42zM5.5 7C4.67 7 4 6.33 4 5.5S4.67 4 5.5 4 7 4.67 7 5.5 6.33 7 5.5 7z"/></svg><div class="cell" style="left:1139.9px;width:110px">Ke kontrole</div><div class="cell" style="left:1254px;width:110px">3 960,00 Kč</div><div class="abtn" style="left:1381px;top:7.5px;width:31.8px;height:31.7px;border-color:#2f5291"><svg style="position:absolute;left:5.5px;top:6.3px;width:17.5px;height:17.5px" viewBox="0 0 24 24"><path fill="#551a8b" d="M3 17.46v3.04c0 .28.22.5.5.5h3.04c.13 0 .26-.05.35-.15L17.81 9.94l-3.75-3.75L3.15 17.1c-.1.1-.15.22-.15.36zM20.71 7.04a.9959.9959 0 0 0 0-1.41l-2.34-2.34a.9959.9959 0 0 0-1.41 0l-1.83 1.83 3.75 3.75 1.83-1.83z"/></svg></div><div class="abtn" style="left:1417px;top:6.7px;width:33.5px;height:33.3px;border-color:#8c6d2c"><svg style="position:absolute;left:7.0px;top:7.4px;width:17px;height:17px" viewBox="0 0 24 24"><path fill="#111" d="M18 8h-1V6c0-2.76-2.24-5-5-5S7 3.24 7 6h2c0-1.66 1.34-3 3-3s3 1.34 3 3v2H6c-1.1 0-2 .9-2 2v10c0 1.1.9 2 2 2h12c1.1 0 2-.9 2-2V10c0-1.1-.9-2-2-2zm0 12H6V10h12v10zm-6-3c1.1 0 2-.9 2-2s-.9-2-2-2-2 .9-2 2 .9 2 2 2z"/></svg></div><div class="abtn" style="left:1455px;top:6.7px;width:33.8px;height:33.3px;border-color:#8c6d2c"><svg style="position:absolute;left:7.6px;top:6.9px;width:17px;height:17px" viewBox="0 0 24 24"><path fill="#111" d="M9 16.17 4.83 12l-1.42 1.41L9 19 21 7l-1.41-1.41z"/></svg></div><div class="abtn" style="left:1493px;top:6.7px;width:33.8px;height:33.3px;border-color:#8c6d2c"><svg style="position:absolute;left:7.1px;top:6.5px;width:16.5px;height:16.5px" viewBox="0 0 24 24"><path fill="#111" d="M16 1H4c-1.1 0-2 .9-2 2v14h2V3h12V1zm3 4H8c-1.1 0-2 .9-2 2v14c0 1.1.9 2 2 2h11c1.1 0 2-.9 2-2V7c0-1.1-.9-2-2-2zm0 16H8V7h11v14z"/></svg></div></div>
<div class="row" style="top:688.33px;background:#ffffff;color:rgba(0,0,0,0.76)"><div class="cell" style="left:27.8px;width:99.2px"><span class="clip">Oren Holiš (admin)</span></div><div class="cell num" style="left:138px;width:190px"><div class="l1"><a style="color:#551a8b">526115438</a><svg style="position:absolute;left:69.85px;top:-0.6px;width:15.6px;height:15.6px" viewBox="0 0 24 24"><path fill="#111" d="M18 2H9c-1.1 0-2 .9-2 2v12c0 1.1.9 2 2 2h9c1.1 0 2-.9 2-2V4c0-1.1-.9-2-2-2zm0 14H9V4h9v12zM3 15v-2h2v2H3zm0-5.5h2v2H3v-2zM10 20h2v2h-2v-2zm-7-1.5v-2h2v2H3zM5 22c-1.1 0-2-.9-2-2h2v2zm3.5 0h-2v-2h2v2zm5 0v-2h2c0 1.1-.9 2-2 2zM5 6v2H3c0-1.1.9-2 2-2z"/></svg></div><div class="l2">Vytvořeno: 14:04 01.04.2026</div></div><div class="cell" style="left:439.2px;width:225px"><div>Oren Holiš</div></div><div class="cell" style="left:672.2px;width:225px"><div>19641591, Čapkova 443, Jinočany,<br>25225, CZ,</div></div><svg style="position:absolute;left:912.6px;top:11.5px;width:15px;height:11px" viewBox="0 0 15 11"><g fill="#0d3a8e"><polygon points="2.65,0 15,0 14.45,2.0 2.1,2.0" opacity="0.8"/><polygon points="1.9,2.75 14.25,2.75 13.7,4.9 1.35,4.9"/><polygon points="1.15,5.6 13.5,5.6 12.95,7.75 0.6,7.75" opacity="0.9"/><polygon points="0.55,8.45 12.9,8.45 12.35,10.6 0,10.6"/></g></svg><div class="cell" style="left:957.2px;width:140px">Platba na fakturu</div><svg style="position:absolute;left:1110.6px;top:11.9px;width:24px;height:24px" viewBox="0 0 24 24"><path fill="#111" d="M9 16.17 4.83 12l-1.42 1.41L9 19 21 7l-1.41-1.41z"/></svg><div class="cell" style="left:1139.9px;width:110px">Nová objednávka</div><div class="cell" style="left:1254px;width:110px">119,00 Kč</div><div class="abtn" style="left:1381px;top:7.5px;width:31.8px;height:31.7px;border-color:#2f5291"><svg style="position:absolute;left:5.5px;top:6.3px;width:17.5px;height:17.5px" viewBox="0 0 24 24"><path fill="#551a8b" d="M3 17.46v3.04c0 .28.22.5.5.5h3.04c.13 0 .26-.05.35-.15L17.81 9.94l-3.75-3.75L3.15 17.1c-.1.1-.15.22-.15.36zM20.71 7.04a.9959.9959 0 0 0 0-1.41l-2.34-2.34a.9959.9959 0 0 0-1.41 0l-1.83 1.83 3.75 3.75 1.83-1.83z"/></svg></div><div class="abtn" style="left:1417px;top:6.7px;width:33.5px;height:33.3px;border-color:#2f5291"><svg style="position:absolute;left:7.0px;top:7.4px;width:17px;height:17px" viewBox="0 0 24 24"><path fill="#111" d="M18 8h-1V6c0-2.76-2.24-5-5-5S7 3.24 7 6h2c0-1.66 1.34-3 3-3s3 1.34 3 3v2H6c-1.1 0-2 .9-2 2v10c0 1.1.9 2 2 2h12c1.1 0 2-.9 2-2V10c0-1.1-.9-2-2-2zm0 12H6V10h12v10zm-6-3c1.1 0 2-.9 2-2s-.9-2-2-2-2 .9-2 2 .9 2 2 2z"/></svg></div><div class="abtn" style="left:1455px;top:6.7px;width:33.8px;height:33.3px;border-color:rgba(47,82,145,0.38)"><svg style="position:absolute;left:7.6px;top:6.9px;width:17px;height:17px" viewBox="0 0 24 24"><path fill="rgba(0,0,0,0.12)" d="M9 16.17 4.83 12l-1.42 1.41L9 19 21 7l-1.41-1.41z"/></svg></div><div class="abtn" style="left:1493px;top:6.7px;width:33.8px;height:33.3px;border-color:#2f5291"><svg style="position:absolute;left:7.1px;top:6.5px;width:16.5px;height:16.5px" viewBox="0 0 24 24"><path fill="#111" d="M16 1H4c-1.1 0-2 .9-2 2v14h2V3h12V1zm3 4H8c-1.1 0-2 .9-2 2v14c0 1.1.9 2 2 2h11c1.1 0 2-.9 2-2V7c0-1.1-.9-2-2-2zm0 16H8V7h11v14z"/></svg></div></div>
<div class="row" style="top:735.0px;background:#fdf7e8;color:#896d30"><div class="cell" style="left:27.8px;width:99.2px"><span class="clip">Jakub Najman</span></div><div class="cell num" style="left:138px;width:190px"><div class="l1"><a style="color:#0000ee">526115437</a><svg style="position:absolute;left:69.85px;top:-0.6px;width:15.6px;height:15.6px" viewBox="0 0 24 24"><path fill="#111" d="M18 2H9c-1.1 0-2 .9-2 2v12c0 1.1.9 2 2 2h9c1.1 0 2-.9 2-2V4c0-1.1-.9-2-2-2zm0 14H9V4h9v12zM3 15v-2h2v2H3zm0-5.5h2v2H3v-2zM10 20h2v2h-2v-2zm-7-1.5v-2h2v2H3zM5 22c-1.1 0-2-.9-2-2h2v2zm3.5 0h-2v-2h2v2zm5 0v-2h2c0 1.1-.9 2-2 2zM5 6v2H3c0-1.1.9-2 2-2z"/></svg></div><div class="l2">Vytvořeno: 13:04 01.04.2026</div></div><div class="cell" style="left:439.2px;width:225px"><div>Klinika<br>Dental s.r.o.</div></div><div class="cell" style="left:672.2px;width:225px"><div>41066413, SK1040218256, Za<br>Humnami 12, Bratislava,<br>CZ,</div></div><div class="tbox" style="left:909.8px"></div><svg style="position:absolute;left:912.6px;top:11.5px;width:15px;height:11px" viewBox="0 0 15 11"><g fill="#0d3a8e"><polygon points="2.65,0 15,0 14.45,2.0 2.1,2.0" opacity="0.8"/><polygon points="1.9,2.75 14.25,2.75 13.7,4.9 1.35,4.9"/><polygon points="1.15,5.6 13.5,5.6 12.95,7.75 0.6,7.75" opacity="0.9"/><polygon points="0.55,8.45 12.9,8.45 12.35,10.6 0,10.6"/></g></svg><div class="cell" style="left:957.2px;width:140px">Platba na fakturu</div><svg style="position:absolute;left:1109.9px;top:9.9px;width:25.5px;height:25.5px" viewBox="0 0 24 24"><path fill="#7b5a08" d="M21.41 11.58l-9-9C12.05 2.22 11.55 2 11 2H4c-1.1 0-2 .9-2 2v7c0 .55.22 1.05.59 1.42l9 9c.36.36.86.58 1.41.58.55 0 1.05-.22 1.41-.59l7-7c.37-.36.59-.86.59-1.41 0-.55-.23-1.06-.59-1.42zM5.5 7C4.67 7 4 6.33 4 5.5S4.67 4 5.5 4 7 4.67 7 5.5 6.33 7 5.5 7z"/></svg><div class="cell" style="left:1139.9px;width:110px">Ke kontrole</div><div class="cell" style="left:1254px;width:110px">1 200,00 Kč</div><div class="abtn" style="left:1381px;top:7.5px;width:31.8px;height:31.7px;border-color:#2f5291"><svg style="position:absolute;left:5.5px;top:6.3px;width:17.5px;height:17.5px" viewBox="0 0 24 24"><path fill="#0000ee" d="M3 17.46v3.04c0 .28.22.5.5.5h3.04c.13 0 .26-.05.35-.15L17.81 9.94l-3.75-3.75L3.15 17.1c-.1.1-.15.22-.15.36zM20.71 7.04a.9959.9959 0 0 0 0-1.41l-2.34-2.34a.9959.9959 0 0 0-1.41 0l-1.83 1.83 3.75 3.75 1.83-1.83z"/></svg></div><div class="abtn" style="left:1417px;top:6.7px;width:33.5px;height:33.3px;border-color:#8c6d2c"><svg style="position:absolute;left:7.0px;top:7.4px;width:17px;height:17px" viewBox="0 0 24 24"><path fill="#111" d="M18 8h-1V6c0-2.76-2.24-5-5-5S7 3.24 7 6h2c0-1.66 1.34-3 3-3s3 1.34 3 3v2H6c-1.1 0-2 .9-2 2v10c0 1.1.9 2 2 2h12c1.1 0 2-.9 2-2V10c0-1.1-.9-2-2-2zm0 12H6V10h12v10zm-6-3c1.1 0 2-.9 2-2s-.9-2-2-2-2 .9-2 2 .9 2 2 2z"/></svg></div><div class="abtn" style="left:1455px;top:6.7px;width:33.8px;height:33.3px;border-color:rgba(47,82,145,0.38)"><svg style="position:absolute;left:7.6px;top:6.9px;width:17px;height:17px" viewBox="0 0 24 24"><path fill="rgba(0,0,0,0.12)" d="M9 16.17 4.83 12l-1.42 1.41L9 19 21 7l-1.41-1.41z"/></svg></div><div class="abtn" style="left:1493px;top:6.7px;width:33.8px;height:33.3px;border-color:#8c6d2c"><svg style="position:absolute;left:7.1px;top:6.5px;width:16.5px;height:16.5px" viewBox="0 0 24 24"><path fill="#111" d="M16 1H4c-1.1 0-2 .9-2 2v14h2V3h12V1zm3 4H8c-1.1 0-2 .9-2 2v14c0 1.1.9 2 2 2h11c1.1 0 2-.9 2-2V7c0-1.1-.9-2-2-2zm0 16H8V7h11v14z"/></svg></div></div>
<div class="abs" style="left:0;top:744.3px;width:1600px;height:56px;background:#f6fbfe;border-top:1px solid #d6eefa"></div>
<div class="abs" style="left:1370.7px;top:764px;font-size:15px;font-weight:bold;color:#12296b;line-height:17px;white-space:nowrap">1–50 of 13354</div>
<svg style="position:absolute;left:1504.5px;top:758.5px;width:25px;height:25px" viewBox="0 0 24 24"><path fill="#c0c0c0" d="M15.41 7.41 14 6l-6 6 6 6 1.41-1.41L10.83 12z"/></svg>
<svg style="position:absolute;left:1545.6px;top:758.5px;width:25px;height:25px" viewBox="0 0 24 24"><path fill="#111" d="M10 6 8.59 7.41 13.17 12l-4.58 4.59L10 18l6-6z"/></svg>
</div></div>
<div class="abs" style="left:230px;top:760px;width:1160px;height:57px;background:linear-gradient(to bottom,rgba(0,0,0,0) 0,rgba(0,0,0,0.025) 68%,rgba(0,0,0,0.07) 76%,rgba(0,0,0,0.11) 100%);-webkit-mask-image:linear-gradient(to right,transparent 0,#000 22%,#000 88%,transparent 100%);z-index:20"></div>
</div></body></html>
